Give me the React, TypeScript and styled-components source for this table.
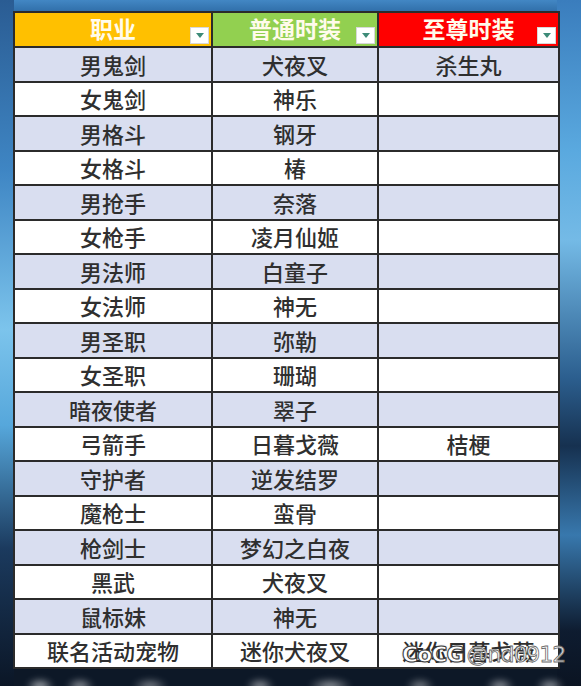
import styled, { createGlobalStyle } from "styled-components";

const GlobalStyle = createGlobalStyle`
  html, body {
    margin: 0;
    padding: 0;
    background: #0f1b2b;
  }
`;

const Stage = styled.div`
  position: relative;
  width: 581px;
  height: 686px;
  overflow: hidden;
  box-sizing: border-box;
  padding: 11px 23px 0 13px;
  font-family: "Noto Sans CJK SC", "Noto Sans", sans-serif;
  background:
    linear-gradient(to bottom, #2a5c93 0%, #3f86c4 25%, #7cc4ec 48%, #56a7db 62%, #1b3a5e 80%, #0b1626 100%) left top / 14px 100% no-repeat,
    linear-gradient(to bottom, #3a7dbd 0%, #5aa9df 22%, #74bae6 35%, #2c5f8f 55%, #163150 65%, #3878ad 78%, #0e1c30 92%, #0b1422 100%) right top / 24px 100% no-repeat,
    linear-gradient(to bottom, #4287c4 0%, #2d6aa4 2%, #1a3a60 90%, #0d1827 97%);
`;

const BottomGlow = styled.div`
  position: absolute;
  left: 0;
  right: 0;
  bottom: -8px;
  height: 20px;
  filter: blur(3px);
  background:
    radial-gradient(ellipse 14px 8px at 40px 12px, rgba(255, 255, 255, 0.7), transparent),
    radial-gradient(ellipse 14px 8px at 80px 12px, rgba(255, 255, 255, 0.6), transparent),
    radial-gradient(ellipse 18px 8px at 150px 12px, rgba(255, 255, 255, 0.5), transparent),
    radial-gradient(ellipse 14px 8px at 260px 12px, rgba(255, 255, 255, 0.6), transparent),
    radial-gradient(ellipse 22px 8px at 330px 12px, rgba(255, 255, 255, 0.6), transparent),
    radial-gradient(ellipse 14px 8px at 420px 12px, rgba(255, 255, 255, 0.5), transparent),
    radial-gradient(ellipse 14px 8px at 500px 12px, rgba(255, 255, 255, 0.6), transparent),
    radial-gradient(ellipse 14px 8px at 550px 12px, rgba(255, 255, 255, 0.6), transparent);
`;

const Sheet = styled.table`
  width: 545px;
  border-collapse: collapse;
  table-layout: fixed;
  border: 2px solid #2b2b2b;
`;

const HeadRow = styled.tr`
  height: 35px;
`;

const HeadCell = styled.th<{ $bg: string }>`
  position: relative;
  padding: 0 0 2px;
  background: ${(p) => p.$bg};
  border: 2px solid #2b2b2b;
  color: #fffbeb;
  font-size: 23px;
  font-weight: 700;
  text-align: center;
  line-height: 1;
`;

const FilterButton = styled.span`
  position: absolute;
  right: 2px;
  bottom: 2px;
  width: 19px;
  height: 17px;
  background: #ffffff;
  border: 1px solid #d8d8d8;
  box-sizing: border-box;
  display: flex;
  align-items: center;
  justify-content: center;

  &::after {
    content: "";
    width: 0;
    height: 0;
    border-left: 4px solid transparent;
    border-right: 4px solid transparent;
    border-top: 5px solid #3d8b78;
  }
`;

const Row = styled.tr<{ $shade: boolean }>`
  height: 34.5px;
  background: ${(p) => (p.$shade ? "#d9def0" : "#ffffff")};
`;

const Cell = styled.td`
  padding: 0 0 1px;
  border: 2px solid #2b2b2b;
  color: #2f2f2f;
  font-size: 22px;
  font-weight: 500;
  text-align: center;
  line-height: 1;
  white-space: nowrap;
  overflow: hidden;
`;

const Watermark = styled.div`
  position: absolute;
  left: 402px;
  top: 642px;
  display: flex;
  align-items: baseline;
  gap: 3px;
  pointer-events: none;
`;

const MarkLogo = styled.span`
  font-family: "DejaVu Sans", sans-serif;
  font-weight: 700;
  font-size: 22px;
  letter-spacing: -1px;
  color: #ffffff;
  -webkit-text-stroke: 1px #3a3a3a;
  text-shadow: 0 0 2px rgba(0, 0, 0, 0.6);
`;

const MarkHandle = styled.span`
  font-family: "DejaVu Sans", sans-serif;
  font-size: 22px;
  letter-spacing: -1px;
  color: rgba(255, 255, 255, 0.85);
  -webkit-text-stroke: 0.8px #6a6a6a;
`;

const headers = [
  { label: "职业", bg: "#ffc000" },
  { label: "普通时装", bg: "#92d050" },
  { label: "至尊时装", bg: "#ff0000" },
];

const rows: [string, string, string][] = [
  ["男鬼剑", "犬夜叉", "杀生丸"],
  ["女鬼剑", "神乐", ""],
  ["男格斗", "钢牙", ""],
  ["女格斗", "椿", ""],
  ["男抢手", "奈落", ""],
  ["女枪手", "凌月仙姬", ""],
  ["男法师", "白童子", ""],
  ["女法师", "神无", ""],
  ["男圣职", "弥勒", ""],
  ["女圣职", "珊瑚", ""],
  ["暗夜使者", "翠子", ""],
  ["弓箭手", "日暮戈薇", "桔梗"],
  ["守护者", "逆发结罗", ""],
  ["魔枪士", "蛮骨", ""],
  ["枪剑士", "梦幻之白夜", ""],
  ["黑武", "犬夜叉", ""],
  ["鼠标妹", "神无", ""],
  ["联名活动宠物", "迷你犬夜叉", "迷你日暮戈薇"],
];

export default function App() {
  return (
    <>
      <GlobalStyle />
      <Stage>
        <Sheet>
          <colgroup>
            <col style={{ width: 198 }} />
            <col style={{ width: 166 }} />
            <col style={{ width: 181 }} />
          </colgroup>
          <thead>
            <HeadRow>
              {headers.map((h) => (
                <HeadCell key={h.label} $bg={h.bg}>
                  {h.label}
                  <FilterButton />
                </HeadCell>
              ))}
            </HeadRow>
          </thead>
          <tbody>
            {rows.map((r, i) => (
              <Row key={r[0]} $shade={i % 2 === 0}>
                {r.map((c, j) => (
                  <Cell key={j}>{c}</Cell>
                ))}
              </Row>
            ))}
          </tbody>
        </Sheet>
        <BottomGlow />
        <Watermark>
          <MarkLogo>CoCG</MarkLogo>
          <MarkHandle>@nd0912</MarkHandle>
        </Watermark>
      </Stage>
    </>
  );
}
